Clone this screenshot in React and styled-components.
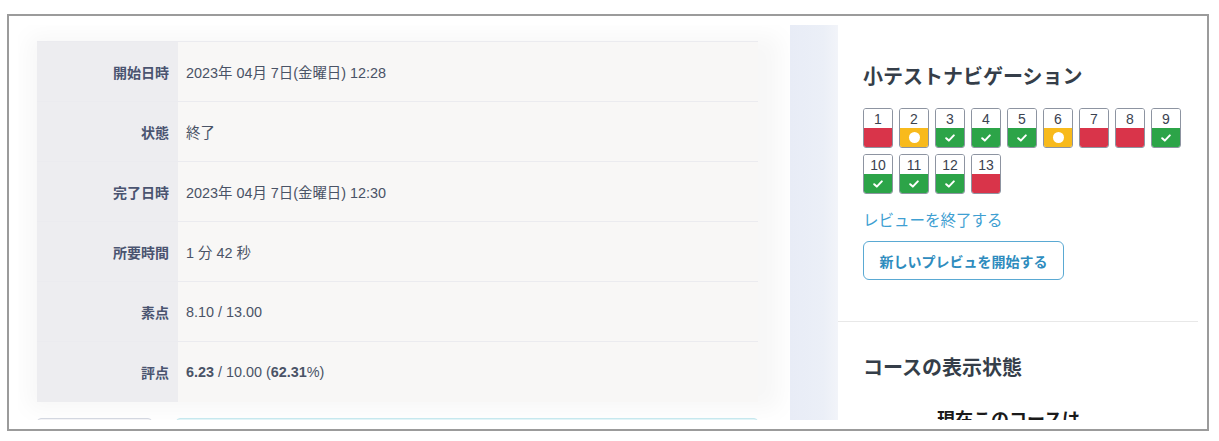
import React from 'react';
import styled, { createGlobalStyle } from 'styled-components';

const Global = createGlobalStyle`
    body {
        margin: 0;
        background: #fff;
        font-family: "Liberation Sans", "Noto Sans CJK JP", sans-serif;
    }
`;

const Frame = styled.div`
    box-sizing: border-box;
    margin: 14px 0 0 7px;
    width: 1202px;
    height: 417px;
    border: 2px solid #9b9b9b;
    padding: 9px 8px 9px 9px;
`;

const Viewport = styled.div`
    display: flex;
    height: 395px;
    overflow: hidden;
`;

const Main = styled.div`
    box-sizing: border-box;
    width: 772px;
    flex-shrink: 0;
    padding: 16px 32px 0 19px;
    background: #f7f7f7;
    box-shadow: inset 0 0 22px 10px #fff;
`;

const Table = styled.div`
    border-top: 1px solid #ebebef;
`;

const Row = styled.div`
    box-sizing: border-box;
    display: grid;
    grid-template-columns: 141px 1fr;
    height: 60px;
    border-bottom: 1px solid #ebebef;
    &:last-child { border-bottom: none; }
`;

const Label = styled.div`
    background: #ededf0;
    display: flex;
    align-items: center;
    justify-content: flex-end;
    padding-right: 9px;
    font-size: 14px;
    font-weight: 700;
    color: #4a5470;
`;

const Value = styled.div`
    background: #f8f7f6;
    display: flex;
    align-items: center;
    padding-left: 8px;
    font-size: 14.4px;
    color: #4a5366;
    white-space: pre;
    b { font-weight: 700; }
`;

const Actions = styled.div`
    display: flex;
    gap: 24px;
    margin-top: 16px;
`;

const Ghost = styled.div`
    height: 30px;
    width: ${p => p.$w};
    flex: ${p => (p.$grow ? 1 : 'none')};
    border: 1px solid ${p => p.$line};
    background: ${p => p.$bg};
    border-radius: 4px;
`;

const Rail = styled.div`
    width: 48px;
    flex-shrink: 0;
    background: linear-gradient(90deg, #e8ecf6 0%, #ebeff7 70%, #f2f4f9 100%);
`;

const Side = styled.div`
    flex: 1;
    background: #fff;
    padding-top: 38px;
`;

const Block = styled.div`
    padding-left: 25px;
`;

const Heading = styled.h3`
    margin: 0;
    font-size: 20px;
    line-height: 28px;
    font-weight: 700;
    color: #353e49;
`;

const NavGrid = styled.div`
    display: flex;
    flex-wrap: wrap;
    gap: 6px;
    width: 330px;
    margin-top: 17px;
`;

const NavBtn = styled.div`
    box-sizing: border-box;
    width: 30px;
    height: 40px;
    border: 1px solid #8d94a1;
    border-radius: 3px;
    overflow: hidden;
    display: flex;
    flex-direction: column;
`;

const NavNum = styled.div`
    height: 19px;
    background: #fff;
    text-align: center;
    font-size: 14px;
    line-height: 20px;
    color: #3b4250;
`;

const NavState = styled.div`
    flex: 1;
    display: flex;
    align-items: center;
    justify-content: center;
    background: ${p => p.$bg};
`;

const Dot = styled.span`
    width: 11px;
    height: 11px;
    border-radius: 50%;
    background: #fff;
`;

const EndLink = styled.a`
    display: block;
    margin-top: 17px;
    font-size: 15.5px;
    line-height: 20px;
    color: #3f9fd2;
    text-decoration: none;
`;

const OutlineBtn = styled.button`
    box-sizing: border-box;
    margin-top: 10px;
    width: 201px;
    height: 39px;
    border: 1px solid #5aa9d3;
    border-radius: 6px;
    background: #fff;
    font-family: inherit;
    font-size: 14px;
    font-weight: 700;
    color: #2e8cbe;
`;

const Divider = styled.hr`
    margin: 41px 1px 0 0;
    border: none;
    border-top: 1px solid #e8e8e8;
`;

const Section = styled(Block)`
    margin-top: 32px;
`;

const Status = styled.div`
    margin-top: 23px;
    padding-left: 99px;
    font-size: 18px;
    font-weight: 700;
    color: #1a1a1a;
`;

const COLORS = { wrong: '#d9344a', partial: '#f8ba1c', right: '#2ca448' };

const nav = [
    'wrong', 'partial', 'right', 'right', 'right', 'partial', 'wrong', 'wrong', 'right',
    'right', 'right', 'right', 'wrong',
];

const rows = [
    ['開始日時', '2023年 04月 7日(金曜日) 12:28'],
    ['状態', '終了'],
    ['完了日時', '2023年 04月 7日(金曜日) 12:30'],
    ['所要時間', '1 分 42 秒'],
    ['素点', '8.10 / 13.00'],
];

const Check = () => (
    <svg width="10" height="8" viewBox="0 0 10 8">
        <polyline points="1.2,4.2 3.8,6.6 8.8,1.4" fill="none" stroke="#fff" strokeWidth="2" strokeLinecap="round" strokeLinejoin="round" />
    </svg>
);

const App = () => (
    <>
        <Global />
        <Frame>
            <Viewport>
                <Main>
                    <Table>
                        {rows.map(([k, v]) => (
                            <Row key={k}>
                                <Label>{k}</Label>
                                <Value>{v}</Value>
                            </Row>
                        ))}
                        <Row>
                            <Label>評点</Label>
                            <Value><b>6.23</b> / 10.00 (<b>62.31</b>%)</Value>
                        </Row>
                    </Table>
                    <Actions>
                        <Ghost $w="113px" $line="#d3d7e0" $bg="#f3f3f6" />
                        <Ghost $grow $line="#c6e8ee" $bg="#e2f4f7" />
                    </Actions>
                </Main>
                <Rail />
                <Side>
                    <Block>
                        <Heading>小テストナビゲーション</Heading>
                        <NavGrid>
                            {nav.map((s, i) => (
                                <NavBtn key={i}>
                                    <NavNum>{i + 1}</NavNum>
                                    <NavState $bg={COLORS[s]}>
                                        {s === 'right' && <Check />}
                                        {s === 'partial' && <Dot />}
                                    </NavState>
                                </NavBtn>
                            ))}
                        </NavGrid>
                        <EndLink href="#">レビューを終了する</EndLink>
                        <OutlineBtn>新しいプレビュを開始する</OutlineBtn>
                    </Block>
                    <Divider />
                    <Section>
                        <Heading>コースの表示状態</Heading>
                    </Section>
                    <Status>現在このコースは</Status>
                </Side>
            </Viewport>
        </Frame>
    </>
);

export default App;
